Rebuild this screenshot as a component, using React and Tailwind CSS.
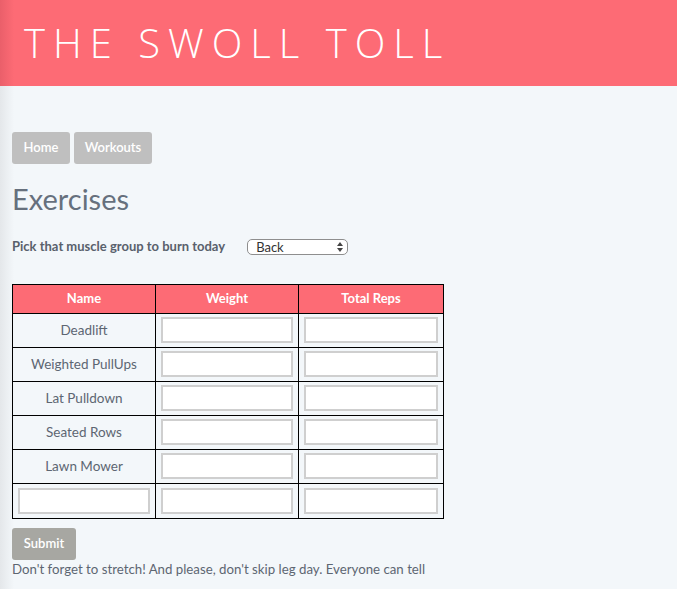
import { useState } from 'react'

const exercises = ['Deadlift', 'Weighted PullUps', 'Lat Pulldown', 'Seated Rows', 'Lawn Mower']

function Field() {
  return <input type="text" className="block w-full h-[26px] bg-white border-2 border-[#cfcfcf] outline-none" />
}

function App() {
  const [group, setGroup] = useState('Back')

  return (
    <div className="min-h-[589px] font-['Lato','Open_Sans',sans-serif] bg-[linear-gradient(to_right,#e4e7ea,#f3f7fa_14px)] text-[#5d6672]">
      {/* Header */}
      <div className="h-[86px] flex items-center pl-[24px] bg-[linear-gradient(to_right,#ea5f6a,#fd6b75_14px)]">
        <h1 className="text-white text-[40px] font-light tracking-[0.2em] leading-none font-['Open_Sans',sans-serif]">
          THE SWOLL TOLL
        </h1>
      </div>

      <div className="px-[12px] pt-[46px]">
        {/* Nav */}
        <div className="flex gap-[4px]">
          <button className="h-[32px] w-[58px] rounded-[3px] bg-[#bfbfbf] text-white text-[13px] font-semibold">Home</button>
          <button className="h-[32px] w-[78px] rounded-[3px] bg-[#bfbfbf] text-white text-[13px] font-semibold">Workouts</button>
        </div>

        <h2 className="mt-[18px] text-[29px] leading-[34px] text-[#66707d]">Exercises</h2>

        <div className="mt-[21px] flex items-center">
          <span className="text-[13px] font-bold text-[#59616c]">Pick that muscle group to burn today</span>
          <div className="relative ml-[22px]">
            <select
              value={group}
              onChange={e => setGroup(e.target.value)}
              className="appearance-none block w-[101px] h-[16px] text-[13px] leading-[14px] border border-[#8e8e8e] rounded-[5px] bg-white text-[#333] pl-[8px]"
            >
              <option>Back</option>
              <option>Chest</option>
              <option>Legs</option>
              <option>Arms</option>
              <option>Shoulders</option>
            </select>
            <svg className="absolute right-[5px] top-[3px] pointer-events-none" width="6" height="10" viewBox="0 0 6 10">
              <path d="M0 4 L3 0 L6 4 Z" fill="#444" />
              <path d="M0 6 L3 10 L6 6 Z" fill="#444" />
            </svg>
          </div>
        </div>

        {/* Table */}
        <table className="mt-[27px] border-collapse w-[431px] table-fixed">
          <thead>
            <tr className="h-[29px] bg-[#fd6b75] text-white text-[13px] font-bold">
              <th className="border border-black w-[143px]">Name</th>
              <th className="border border-black w-[143px]">Weight</th>
              <th className="border border-black w-[145px]">Total Reps</th>
            </tr>
          </thead>
          <tbody>
            {exercises.map(name => (
              <tr key={name} className="h-[34px]">
                <td className="border border-black text-center text-[13.5px] text-[#5d6672]">{name}</td>
                <td className="border border-black px-[5px]"><Field /></td>
                <td className="border border-black px-[5px]"><Field /></td>
              </tr>
            ))}
            <tr className="h-[35px]">
              <td className="border border-black px-[5px]"><Field /></td>
              <td className="border border-black px-[5px]"><Field /></td>
              <td className="border border-black px-[5px]"><Field /></td>
            </tr>
          </tbody>
        </table>

        <button className="mt-[9px] h-[32px] w-[64px] rounded-[3px] bg-[#a7a7a2] text-white text-[13px] font-semibold">Submit</button>
        <p className="text-[13.25px] text-[#5d6672]">Don't forget to stretch! And please, don't skip leg day. Everyone can tell</p>
      </div>
    </div>
  )
}

export default App
